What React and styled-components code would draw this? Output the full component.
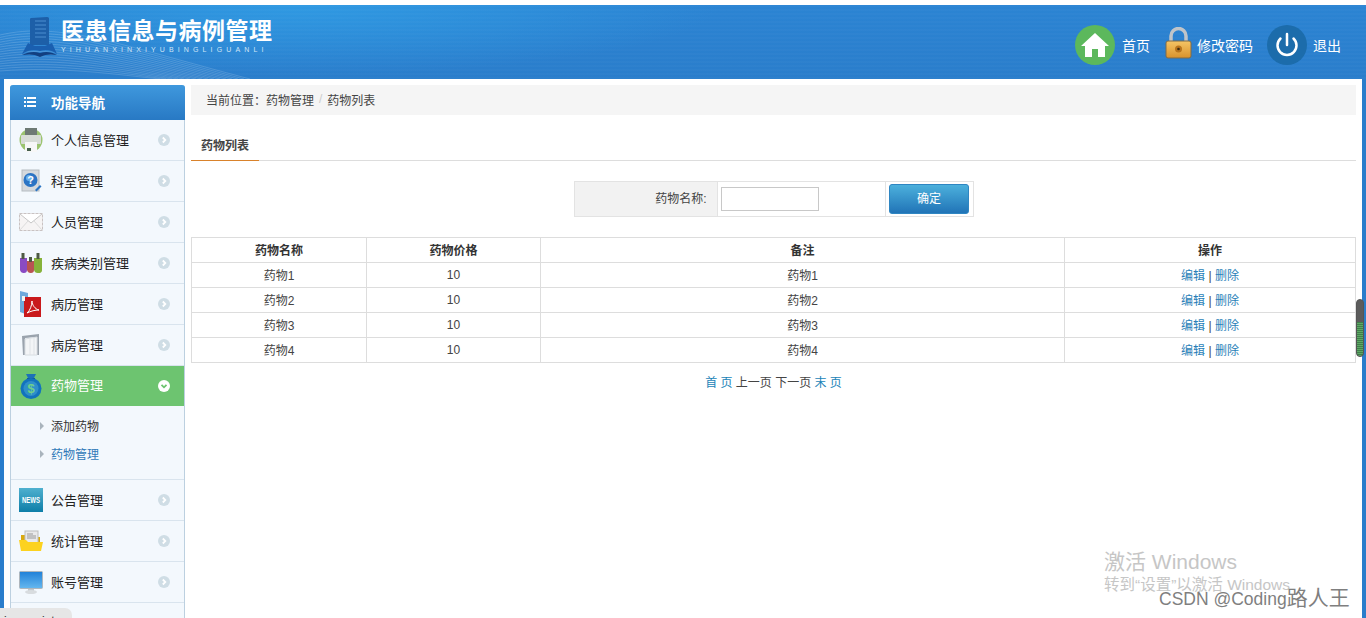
import React from "react";
import styled, { createGlobalStyle } from "styled-components";

const GlobalStyle = createGlobalStyle`
  html, body {
    margin: 0;
    padding: 0;
    height: 100%;
    overflow: hidden;
    background: #fff;
    font-family: "Liberation Sans", "Noto Sans CJK SC", sans-serif;
    font-size: 12px;
    color: #333;
  }
  #root { height: 100%; }
  * { box-sizing: border-box; }
`;

const Page = styled.div`
  position: relative;
  height: 100%;
  padding-top: 5px;
  display: flex;
  flex-direction: column;
  overflow: hidden;
  background: #fff;
`;

const Header = styled.header`
  position: relative;
  flex: 0 0 74px;
  display: flex;
  align-items: center;
  justify-content: space-between;
  padding: 0 25px 0 22px;
  overflow: hidden;
  background:
    repeating-linear-gradient(0deg, rgba(255, 255, 255, 0.018) 0 2px, transparent 2px 4px),
    radial-gradient(ellipse 420px 70px at 300px 0, #2f99e2 0%, rgba(47, 153, 226, 0) 100%),
    linear-gradient(180deg, #2b84d3 0%, #2a7dcb 100%);
`;

const Waves = styled.svg`
  position: absolute;
  left: 0;
  top: 0;
  width: 270px;
  height: 74px;
`;

const Brand = styled.div`
  position: relative;
  display: flex;
  align-items: flex-start;
  gap: 3px;
  margin-top: -11px;
`;

const BrandText = styled.div`
  display: flex;
  flex-direction: column;
  color: #fff;
`;

const BrandTitle = styled.div`
  font-family: "Noto Sans CJK SC", sans-serif;
  font-size: 23px;
  line-height: 25px;
  font-weight: 700;
  letter-spacing: 0.5px;
  white-space: nowrap;
`;

const BrandSub = styled.div`
  margin-top: 3px;
  font-size: 7px;
  line-height: 9px;
  letter-spacing: 4.12px;
  color: #cfe4f6;
  white-space: nowrap;
`;

const TopNav = styled.nav`
  position: relative;
  display: flex;
  align-items: center;
  gap: 14px;
  padding-top: 5px;
`;

const TopLink = styled.a`
  display: flex;
  align-items: center;
  gap: ${(p) => p.$gap}px;
  color: #fff;
  font-size: 14px;
  line-height: 20px;
`;

const TopLabel = styled.span`
  padding-top: 3px;
`;

const LockIcon = styled.svg`
  margin-top: -4px;
`;

const Main = styled.div`
  flex: 1;
  min-height: 0;
  display: flex;
  gap: 6px;
  padding: 6px 10px 0 10px;
  background:
    linear-gradient(#2a7dcb, #2a7dcb) left top / 4px 100% no-repeat,
    linear-gradient(#2a7dcb, #2a7dcb) right top / 4px 100% no-repeat,
    #fff;
`;

const Sidebar = styled.aside`
  flex: 0 0 175px;
  height: 700px;
  background: #f3f8fd;
  border: 1px solid #bcd0e0;
  border-top: 0;
  border-radius: 3px 3px 0 0;
`;

const SideHead = styled.div`
  height: 35px;
  margin: 0 -1px;
  display: flex;
  align-items: center;
  gap: 15px;
  padding: 0 0 2px 14px;
  border-radius: 3px 3px 0 0;
  background: linear-gradient(180deg, #3f98dd 0%, #2879c4 100%);
  color: #fff;
  font-size: 13.500px;
  font-weight: 700;
`;

const NavRow = styled.div`
  height: ${(p) => (p.$active ? 40 : 41)}px;
  display: flex;
  align-items: center;
  gap: 7px;
  padding-left: 7px;
  font-size: 13px;
  color: ${(p) => (p.$active ? "#fff" : "#222")};
  background: ${(p) => (p.$active ? "#6dc470" : "transparent")};
  border-bottom: 1px solid ${(p) => (p.$active ? "#6dc470" : "#d9e4ee")};
`;

const NavLabel = styled.span`
  padding-bottom: 2px;
`;

const IconBox = styled.span`
  flex: 0 0 26px;
  height: 30px;
  display: flex;
  align-items: center;
  justify-content: center;
`;

const RowArrow = styled.svg`
  margin-left: auto;
  margin-right: 14px;
`;

const SubMenu = styled.div`
  height: 74px;
  padding: 7px 0 0 29px;
  border-bottom: 1px solid #d9e4ee;
`;

const SubItem = styled.div`
  height: 28px;
  display: flex;
  align-items: center;
  gap: 7px;
  padding-bottom: 3px;
  color: ${(p) => (p.$current ? "#2f78b8" : "#333")};
  &::before {
    content: "";
    border-left: 4px solid #a9b4bd;
    border-top: 4px solid transparent;
    border-bottom: 4px solid transparent;
  }
`;

const Content = styled.main`
  flex: 1;
  min-width: 0;
`;

const Crumbs = styled.div`
  height: 30px;
  display: flex;
  align-items: center;
  padding: 0 0 2px 15px;
  background: #f5f5f5;
  color: #444;
`;

const CrumbSep = styled.span`
  color: #ccc;
  margin: 0 5px;
`;

const Tabs = styled.div`
  margin-top: 19px;
  height: 27px;
  border-bottom: 1px solid #ddd;
`;

const Tab = styled.div`
  width: 68px;
  height: 27px;
  line-height: 24px;
  text-align: center;
  font-weight: 700;
  color: #444;
  border-bottom: 1px solid #d9822b;
`;

const SearchTable = styled.table`
  width: 400px;
  height: 36px;
  margin: 20px auto 0;
  border-collapse: collapse;
  table-layout: fixed;
  td {
    border: 1px solid #e3e3e3;
    padding: 0;
  }
`;

const SearchLabel = styled.td`
  width: 143px;
  background: #f2f2f2;
  text-align: right;
  padding: 0 10px 3px 0 !important;
  color: #444;
`;

const SearchField = styled.td`
  width: 168px;
  padding-left: 3px !important;
`;

const SearchInput = styled.input`
  display: block;
  width: 98px;
  height: 24px;
  border: 1px solid #c8c8c8;
  background: #fff;
`;

const SearchAction = styled.td`
  text-align: center;
`;

const SubmitButton = styled.button`
  display: block;
  width: 80px;
  height: 30px;
  margin: 0 auto;
  padding: 0 0 3px;
  border: 1px solid #2f86c2;
  border-radius: 3px;
  background: linear-gradient(180deg, #4cb0dc 0%, #2174b7 100%);
  color: #fff;
  font: inherit;
`;

const DataTable = styled.table`
  width: 100%;
  margin-top: 20px;
  border-collapse: collapse;
  table-layout: fixed;
  th, td {
    height: 25px;
    padding: 0 0 2px;
    border: 1px solid #ddd;
    text-align: center;
    font-size: 12px;
    color: #444;
  }
  th { color: #333; }
`;

const PriceCell = styled.td`
  padding: 0 !important;
`;

const ActionLink = styled.a`
  color: #2a7fb8;
`;

const Pager = styled.div`
  height: 41px;
  line-height: 40px;
  text-align: center;
  color: #444;
`;

const PagerLink = styled.a`
  color: #1b84b8;
`;

const ScrollThumb = styled.div`
  position: absolute;
  left: 1356px;
  top: 299px;
  width: 8px;
  height: 58px;
  border-radius: 4px;
  border: 1px solid #555;
  background:
    repeating-linear-gradient(0deg, #5fa866 0 1px, #3f7f4a 1px 2px) left 0 bottom 0 / 100% 34px no-repeat,
    #5c5c5c;
`;

const LinkHint = styled.div`
  position: absolute;
  left: 0;
  top: 608px;
  width: 72px;
  height: 20px;
  padding: 6px 0 0 4px;
  background: #e6e6e6;
  border-radius: 0 7px 0 0;
  color: #333;
  white-space: nowrap;
  overflow: hidden;
`;

const Watermark = styled.div`
  position: absolute;
  left: 1104px;
  top: ${(p) => p.$top}px;
  font-size: ${(p) => p.$size}px;
  line-height: 1.2;
  color: #c6c6c6;
  white-space: nowrap;
`;

const CsdnMark = styled.div`
  position: absolute;
  left: 1159px;
  top: 587px;
  font-size: 17.500px;
  line-height: 22px;
  color: #7f7f7f;
  white-space: nowrap;
`;

const CsdnName = styled.span`
  font-size: 21px;
`;

const PrinterIcon = () => (
  <svg width="26" height="26" viewBox="0 0 26 26">
    <circle cx="13" cy="13" r="11.500" fill="#9bc46f" />
    <rect x="7" y="1" width="12" height="8" fill="#6e7a74" />
    <rect x="3" y="8" width="20" height="9" rx="1" fill="#d7dcd6" />
    <rect x="7" y="15" width="12" height="10" fill="#f7f7f7" />
    <rect x="9" y="21" width="4" height="3" fill="#46604c" />
  </svg>
);

const HelpIcon = () => (
  <svg width="24" height="24" viewBox="0 0 24 24">
    <rect x="3" y="1" width="17" height="21" fill="#d5d9dd" stroke="#b5bbc1" />
    <circle cx="11.500" cy="11" r="7" fill="#2b74c4" />
    <circle cx="10" cy="9" r="3" fill="#6bb0ec" />
    <text x="11.500" y="15" fontSize="11" fontWeight="700" fill="#fff" textAnchor="middle">?</text>
    <path d="M16 21l5-5 1.500 1.500-5 5z" fill="#2b74c4" />
  </svg>
);

const MailIcon = () => (
  <svg width="24" height="18" viewBox="0 0 24 18">
    <rect x="0.500" y="0.500" width="23" height="17" fill="#f6f4f4" stroke="#c9c2c2" strokeDasharray="3 1" />
    <path d="M1 1l11 9 11-9" fill="#fff" stroke="#c6c6c6" />
    <path d="M1 17l8-9M23 17l-8-9" stroke="#dcdcdc" fill="none" />
  </svg>
);

const TubesIcon = () => (
  <svg width="22" height="20" viewBox="0 0 22 20">
    <path d="M0 5h7v12a3 3 0 01-3 3 4 4 0 01-4-3z" fill="#8a4bc4" />
    <path d="M7 8h7v9a3 3 0 01-3 3 4 4 0 01-4-3z" fill="#b95353" />
    <path d="M14 5h8v12a3 3 0 01-4 3 4 4 0 01-4-3z" fill="#86b23a" />
    <path d="M1.500 0h3v6h-3zM9 4h3v5H9zM16.500 0h3v6h-3z" fill="#4e5a44" />
  </svg>
);

const PdfIcon = () => (
  <svg width="24" height="28" viewBox="0 0 24 28">
    <path d="M1 1l8 2v22l-8-3z" fill="#6fa9dc" />
    <rect x="5" y="7" width="17" height="20" fill="#c9191c" />
    <path d="M8 23c3-2 5-8 5-12 0 4 3 8 7 9-4 0-8 1-12 3z" fill="none" stroke="#fff" />
    <rect x="3" y="6" width="3" height="5" fill="#f3f3f3" />
  </svg>
);

const DoorIcon = () => (
  <svg width="20" height="24" viewBox="0 0 20 24">
    <path d="M1 3l17-2v21h-2V4L4 5v17H2z" fill="#9aa3ad" />
    <path d="M4 6l12-2v18H4z" fill="#f3f5f7" stroke="#d8dde2" />
    <path d="M9 6v16M13 5v17" stroke="#dfe3e7" />
  </svg>
);

const MoneyIcon = () => (
  <svg width="24" height="26" viewBox="0 0 24 26">
    <path d="M7 1h10l-2.500 5h-5z" fill="#1c71b8" />
    <rect x="8" y="5" width="8" height="2" fill="#0d4d85" />
    <circle cx="12" cy="15.500" r="10.500" fill="#1272bd" />
    <circle cx="12" cy="15.500" r="7.500" fill="#2e8fc9" />
    <text x="12" y="20" fontSize="13" fontWeight="700" fill="#6fd08a" textAnchor="middle">$</text>
  </svg>
);

const NewsIcon = () => (
  <svg width="24" height="24" viewBox="0 0 24 24">
    <defs>
      <linearGradient id="newsFill" x1="0" y1="0" x2="0" y2="1">
        <stop offset="0" stopColor="#4fb0cf" />
        <stop offset="1" stopColor="#0d7ea8" />
      </linearGradient>
    </defs>
    <rect width="24" height="24" fill="url(#newsFill)" />
    <text x="3" y="15" fontSize="9" fontWeight="700" fill="#fff" textLength="18" lengthAdjust="spacingAndGlyphs">NEWS</text>
  </svg>
);

const FolderIcon = () => (
  <svg width="24" height="22" viewBox="0 0 24 22">
    <path d="M2 5h6l2 2h11v6H2z" fill="#d9a90f" />
    <rect x="6" y="1" width="13" height="12" fill="#e9e9ea" stroke="#bdbdbd" />
    <path d="M8 4h6M8 6h9M8 8h9" stroke="#999" />
    <path d="M0 10h7l2 2h15l-2 9H2z" fill="#fcd21f" />
  </svg>
);

const MonitorIcon = () => (
  <svg width="24" height="23" viewBox="0 0 24 23">
    <defs>
      <linearGradient id="screenFill" x1="0" y1="0" x2="0" y2="1">
        <stop offset="0" stopColor="#1f80d8" />
        <stop offset="1" stopColor="#66b8ef" />
      </linearGradient>
    </defs>
    <rect x="0.500" y="0.500" width="23" height="17" rx="1" fill="url(#screenFill)" stroke="#aeb6bd" />
    <rect x="9" y="18" width="6" height="2" fill="#c3c8cc" />
    <ellipse cx="12" cy="21" rx="6" ry="2" fill="#d8dcdf" />
  </svg>
);

const navBefore = [
  { label: "个人信息管理", Icon: PrinterIcon },
  { label: "科室管理", Icon: HelpIcon },
  { label: "人员管理", Icon: MailIcon },
  { label: "疾病类别管理", Icon: TubesIcon },
  { label: "病历管理", Icon: PdfIcon },
  { label: "病房管理", Icon: DoorIcon },
];

const navAfter = [
  { label: "公告管理", Icon: NewsIcon },
  { label: "统计管理", Icon: FolderIcon },
  { label: "账号管理", Icon: MonitorIcon },
];

const drugs = [1, 2, 3, 4];

function Arrow({ open }) {
  return (
    <RowArrow width="12" height="12" viewBox="0 0 12 12">
      <circle cx="6" cy="6" r="6" fill={open ? "#fff" : "#cfdde5"} />
      <path
        d={open ? "M3.500 4.800L6 7.300l2.500-2.500" : "M4.800 3.500L7.300 6 4.800 8.500"}
        fill="none"
        stroke={open ? "#6dc470" : "#fff"}
        strokeWidth="1.800"
      />
    </RowArrow>
  );
}

function NavItem({ label, Icon, active }) {
  return (
    <NavRow $active={active}>
      <IconBox>
        <Icon />
      </IconBox>
      <NavLabel>{label}</NavLabel>
      <Arrow open={active} />
    </NavRow>
  );
}

export default function App() {
  return (
    <Page>
      <GlobalStyle />
      <Header>
        <Waves viewBox="0 0 270 74" fill="none" stroke="#fff" strokeOpacity="0.16">
          {Array.from({ length: 16 }, (_, i) => (
            <path key={i} d={`M0 ${30 + i * 2.4}C60 ${16 + i * 3} 120 ${40 + i * 2} ${250 - i * 6} 74`} />
          ))}
        </Waves>
        <Brand>
          <svg width="36" height="40" viewBox="0 0 36 40">
            <path d="M9 1l16-1c2 0 2 1 2 2v26H8V3c0-1 0-2 1-2z" fill="#1d5fa8" />
            <path d="M13 4h11M13 8h11M13 12h11M13 16h11M13 20h11" stroke="#4d8fd0" />
            <path d="M0 37c6-4 12-5 18-3 6-2 12-1 17 3l-5-11-7 3H13l-7-3z" fill="#1a5fb0" />
            <path d="M0 38c6-3 12-4 18-2 6-2 12-1 17 2-5-1-12-1-17 2-5-3-12-3-17-2z" fill="#123f80" />
          </svg>
          <BrandText>
            <BrandTitle>医患信息与病例管理</BrandTitle>
            <BrandSub>YIHUANXINXIYUBINGLIGUANLI</BrandSub>
          </BrandText>
        </Brand>
        <TopNav>
          <TopLink $gap={7}>
            <svg width="40" height="40" viewBox="0 0 40 40">
              <circle cx="20" cy="20" r="20" fill="#5cb85c" />
              <path d="M20 8L6 21h4v11h7v-8h6v8h7V21h4z" fill="#fff" />
            </svg>
            <TopLabel>首页</TopLabel>
          </TopLink>
          <TopLink $gap={5}>
            <LockIcon width="28" height="32" viewBox="0 0 28 32">
              <defs>
                <linearGradient id="lockBody" x1="0" y1="0" x2="0" y2="1">
                  <stop offset="0" stopColor="#f5c565" />
                  <stop offset="1" stopColor="#d9922c" />
                </linearGradient>
              </defs>
              <path d="M7 15V9a7.500 7.500 0 0115 0v6" fill="none" stroke="#bfc4c9" strokeWidth="3.500" />
              <rect x="2" y="14" width="25" height="17" rx="2" fill="url(#lockBody)" stroke="#7d6a4a" />
              <circle cx="14.500" cy="22" r="3.500" fill="#b8741c" />
              <circle cx="14.500" cy="22" r="1.300" fill="#3a2a10" />
            </LockIcon>
            <TopLabel>修改密码</TopLabel>
          </TopLink>
          <TopLink $gap={6}>
            <svg width="40" height="40" viewBox="0 0 40 40">
              <circle cx="20" cy="20" r="20" fill="#1c6cab" />
              <path d="M13.500 13.500a9.500 9.500 0 1013 0" fill="none" stroke="#fff" strokeWidth="2.500" strokeLinecap="round" />
              <path d="M20 9v11" stroke="#fff" strokeWidth="2.500" strokeLinecap="round" />
            </svg>
            <TopLabel>退出</TopLabel>
          </TopLink>
        </TopNav>
      </Header>
      <Main>
        <Sidebar>
          <SideHead>
            <svg width="12" height="10" viewBox="0 0 12 10" fill="#fff">
              <path d="M0 0h2v2H0zM3 0h9v2H3zM0 4h2v2H0zM3 4h9v2H3zM0 8h2v2H0zM3 8h9v2H3z" />
            </svg>
            功能导航
          </SideHead>
          {navBefore.map((item) => (
            <NavItem key={item.label} {...item} />
          ))}
          <NavItem label="药物管理" Icon={MoneyIcon} active />
          <SubMenu>
            <SubItem>添加药物</SubItem>
            <SubItem $current>药物管理</SubItem>
          </SubMenu>
          {navAfter.map((item) => (
            <NavItem key={item.label} {...item} />
          ))}
        </Sidebar>
        <Content>
          <Crumbs>
            {"当前位置\uFF1A药物管理"}<CrumbSep>/</CrumbSep>药物列表
          </Crumbs>
          <Tabs>
            <Tab>药物列表</Tab>
          </Tabs>
          <SearchTable>
            <tbody>
              <tr>
                <SearchLabel>药物名称:</SearchLabel>
                <SearchField>
                  <SearchInput type="text" />
                </SearchField>
                <SearchAction>
                  <SubmitButton type="button">确定</SubmitButton>
                </SearchAction>
              </tr>
            </tbody>
          </SearchTable>
          <DataTable>
            <colgroup>
              <col width="175" />
              <col width="174" />
              <col width="524" />
              <col />
            </colgroup>
            <thead>
              <tr>
                <th>药物名称</th>
                <th>药物价格</th>
                <th>备注</th>
                <th>操作</th>
              </tr>
            </thead>
            <tbody>
              {drugs.map((n) => (
                <tr key={n}>
                  <td>药物{n}</td>
                  <PriceCell>10</PriceCell>
                  <td>药物{n}</td>
                  <td>
                    <ActionLink>编辑</ActionLink> | <ActionLink>删除</ActionLink>
                  </td>
                </tr>
              ))}
            </tbody>
          </DataTable>
          <Pager>
            <PagerLink>首 页</PagerLink> 上一页 下一页 <PagerLink>末 页</PagerLink>
          </Pager>
        </Content>
      </Main>
      <ScrollThumb />
      <LinkHint>javascript:;</LinkHint>
      <Watermark $top={549} $size={21}>激活 Windows</Watermark>
      <Watermark $top={576} $size={15.500}>转到“设置”以激活 Windows</Watermark>
      <CsdnMark>CSDN @Coding<CsdnName>路人王</CsdnName></CsdnMark>
    </Page>
  );
}
